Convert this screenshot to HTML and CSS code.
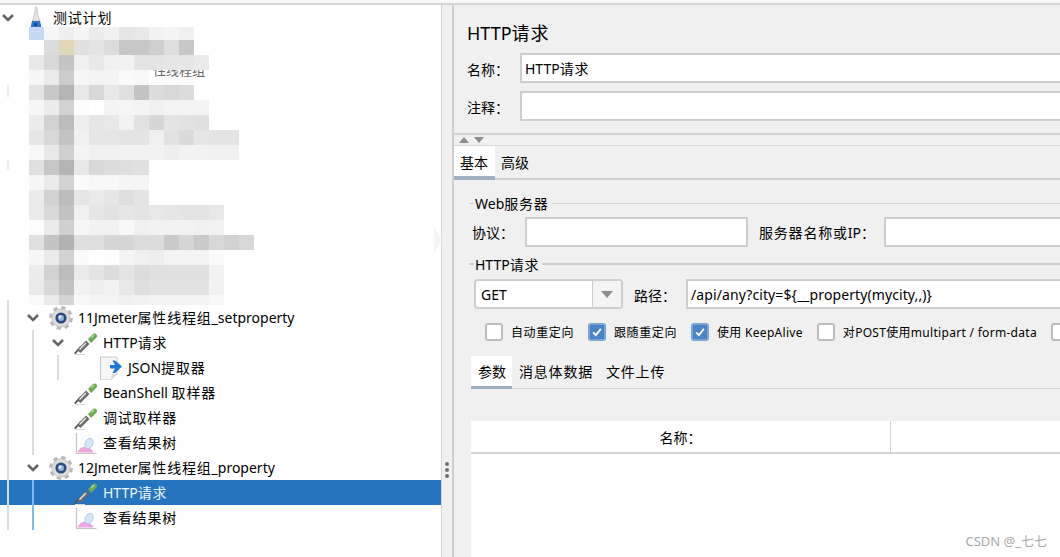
FILE: index.html
```html
<!DOCTYPE html>
<html lang="en">
<head>
    <meta charset="UTF-8">
    <meta name="viewport" content="width=device-width, initial-scale=1.0">
    <title>HTTP请求</title>
    <link rel="stylesheet" href="styles.css">
</head>
<body>
    <svg class="icon-defs" width="0" height="0">
        <symbol id="chevron" viewBox="0 0 14 10">
            <path d="M2 2 L7 7 L12 2" fill="none" stroke="#666" stroke-width="2.6"/>
        </symbol>
        <symbol id="flask" viewBox="0 0 24 24">
            <path d="M11.5 1 L13 1 L13.5 8 L16 15 L8.5 15 L10.5 8 Z" fill="#e6e6e6" stroke="#bcbcbc" stroke-width="0.8"/>
            <path d="M8 15 L16 15 L17.5 21.5 L6.5 21.5 Z" fill="#2b78d4"/>
            <path d="M10 17 L13 17 L13 20 L10 20 Z" fill="#0f4794"/>
        </symbol>
        <symbol id="gear" viewBox="0 0 24 24">
            <circle cx="12" cy="12" r="10.2" fill="none" stroke="#b8b8b8" stroke-width="3.4" stroke-dasharray="4.2 3.8"/>
            <circle cx="12" cy="12" r="9.2" fill="#dcdcdc" stroke="#bdbdbd" stroke-width="0.8"/>
            <circle cx="12" cy="12" r="5.6" fill="#2b4a82"/>
            <circle cx="12" cy="12" r="3" fill="#8fb2e0"/>
            <circle cx="11" cy="11" r="1.4" fill="#e6eefa"/>
        </symbol>
        <symbol id="dropper" viewBox="0 0 24 24">
            <path d="M1 23.5 L11 23.5" stroke="#d8d8d8" stroke-width="1"/>
            <path d="M0.8 22.6 L7 15.5" stroke="#555" stroke-width="1.8"/>
            <path d="M3 19 L12 9.5 L15.5 13 L6.5 22 Z" fill="#6a6a6a"/>
            <path d="M5.5 18.5 L12 12" stroke="#e8e8e8" stroke-width="1.4"/>
            <path d="M14 8 L18 4 Q20.5 1.5 22.5 3.5 Q24 5.5 21.5 7.5 L17 12 Z" fill="#6faa55"/>
            <path d="M17.5 6.5 L20 4" stroke="#b6d8a2" stroke-width="1.4"/>
        </symbol>
        <symbol id="extractor" viewBox="0 0 24 24">
            <path d="M1.5 1 L18 1 L18 18 L12 24 L1.5 24 Z" fill="#f7f7f7" stroke="#c8c8c8"/>
            <path d="M12 24 L13 18 L18 18 Z" fill="#dcdcdc"/>
            <path d="M11 9 L16 9 L13.5 4.5 L16 4.5 L23 10.5 L16 17 L13.5 17 L16 12.5 L11 12.5 Z" fill="#1d78d8"/>
        </symbol>
        <symbol id="graph" viewBox="0 0 24 24">
            <path d="M2.5 2 L2.5 22.5 L22.5 22.5" fill="none" stroke="#c4c4c4" stroke-width="1.2"/>
            <path d="M3.5 21.5 Q5 17 9 16 Q13 15 15 17 Q18.5 18 19.5 21.5 Z" fill="#f2a4dc"/>
            <ellipse cx="15" cy="12.5" rx="3.8" ry="5.5" transform="rotate(28 15 12.5)" fill="#d6e5f6" stroke="#a9c7e8" stroke-width="0.8"/>
        </symbol>
    </svg>

    <div class="top-strip"></div>
    <div class="app">
        <div class="tree">
            <div class="row lv0"><svg class="chev"><use href="#chevron"/></svg><svg class="icon"><use href="#flask"/></svg><span class="label cn">测试计划</span></div>
            <div class="tree-blur"></div>
            <div class="row lv1"><svg class="chev"><use href="#chevron"/></svg><svg class="icon"><use href="#gear"/></svg><span class="label">11Jmeter<span class="cn">属性线程组</span>_setproperty</span></div>
            <div class="row lv2"><svg class="chev"><use href="#chevron"/></svg><svg class="icon"><use href="#dropper"/></svg><span class="label">HTTP<span class="cn">请求</span></span></div>
            <div class="row lv3"><span class="chev"></span><svg class="icon"><use href="#extractor"/></svg><span class="label">JSON<span class="cn">提取器</span></span></div>
            <div class="row lv2"><span class="chev"></span><svg class="icon"><use href="#dropper"/></svg><span class="label">BeanShell <span class="cn">取样器</span></span></div>
            <div class="row lv2"><span class="chev"></span><svg class="icon"><use href="#dropper"/></svg><span class="label cn">调试取样器</span></div>
            <div class="row lv2"><span class="chev"></span><svg class="icon"><use href="#graph"/></svg><span class="label cn">查看结果树</span></div>
            <div class="row lv1"><svg class="chev"><use href="#chevron"/></svg><svg class="icon"><use href="#gear"/></svg><span class="label">12Jmeter<span class="cn">属性线程组</span>_property</span></div>
            <div class="row lv2 selected"><span class="chev"></span><svg class="icon"><use href="#dropper"/></svg><span class="label">HTTP<span class="cn">请求</span></span></div>
            <div class="row lv2"><span class="chev"></span><svg class="icon"><use href="#graph"/></svg><span class="label cn">查看结果树</span></div>

            <!-- the text sits under the pixelated cells, which hide its upper half -->
            <div class="mosaic-scrap">性线程组</div>
            <!-- pixelated part of the tree, cells are filled by script.js -->
            <div class="mosaic" id="mosaic"></div>

            <span class="guide g-root"></span>
            <span class="guide g-root-a"></span>
            <span class="guide g-root-b"></span>
            <span class="guide g-group"></span>
            <span class="guide g-http"></span>
            <span class="guide g-active"></span>
        </div>

        <div class="splitter">
            <span class="split-arrow"></span>
            <span class="grip"><i></i><i></i><i></i></span>
        </div>

        <div class="detail">
            <div class="detail-inner">
                <div class="head">
                    <h1>HTTP<span class="cn">请求</span></h1>
                    <div class="form-row">
                        <label class="head-label">名称：</label>
                        <div class="input grow">HTTP<span class="cn">请求</span></div>
                    </div>
                    <div class="form-row">
                        <label class="head-label">注释：</label>
                        <div class="input grow"></div>
                    </div>
                </div>

                <div class="arrows"><span class="tri-up"></span><span class="tri-down"></span></div>

                <div class="tabs main-tabs">
                    <div class="tab active">基本</div>
                    <div class="tab">高级</div>
                </div>

                <div class="group-title web-title"><span>Web<span class="cn">服务器</span></span></div>
                <div class="server-row">
                    <label class="proto-label">协议：</label>
                    <div class="input proto"></div>
                    <label class="server-label"><span class="cn">服务器名称或</span>IP：</label>
                    <div class="input grow"></div>
                </div>

                <div class="group-title http-title"><span>HTTP<span class="cn">请求</span></span></div>
                <div class="path-row">
                    <div class="select">
                        <span class="select-value">GET</span>
                        <span class="select-btn"><span class="tri-down big"></span></span>
                    </div>
                    <label class="path-label">路径：</label>
                    <div class="input grow path-input">/api/any?city=${__property(mycity,,)}</div>
                </div>

                <div class="checks">
                    <div class="check"><span class="box"></span><span>自动重定向</span></div>
                    <div class="check"><span class="box on"><svg viewBox="0 0 18 18"><path d="M4 9.5 L7.5 13 L14 5" fill="none" stroke="#fff" stroke-width="2.4"/></svg></span><span>跟随重定向</span></div>
                    <div class="check"><span class="box on"><svg viewBox="0 0 18 18"><path d="M4 9.5 L7.5 13 L14 5" fill="none" stroke="#fff" stroke-width="2.4"/></svg></span><span class="latin">使用 KeepAlive</span></div>
                    <div class="check"><span class="box"></span><span class="latin">对POST使用multipart / form-data</span></div>
                    <div class="check"><span class="box"></span></div>
                </div>

                <div class="tabs sub-tabs">
                    <div class="tab active">参数</div>
                    <div class="tab cn">消息体数据</div>
                    <div class="tab cn">文件上传</div>
                </div>

                <div class="params">
                    <div class="params-head">
                        <div class="col col-name">名称：</div>
                        <div class="col"></div>
                    </div>
                </div>
            </div>
        </div>
    </div>
    <div class="watermark">CSDN @_七七</div>

    <script src="script.js"></script>
</body>
</html>
```
FILE: styles.css
```css
html, body {
    margin: 0;
    padding: 0;
    height: 557px;
    overflow: hidden;
    background-color: #fff;
    color: #000;
    font-family: "Noto Sans", "Noto Sans CJK SC", sans-serif;
    font-size: 14px;
}
.cn {
    letter-spacing: 0.8px;
}
.icon-defs {
    position: absolute;
}
.top-strip {
    height: 5px;
    box-sizing: border-box;
    background-color: #f8f8f8;
    border-bottom: 2px solid #d6d6d6;
}
.app {
    display: flex;
    height: 552px;
}

/* Left tree */
.tree {
    position: relative;
    width: 441px;
    flex: none;
    overflow: hidden;
    background-color: #fff;
}
.row {
    display: flex;
    align-items: center;
    height: 25px;
    white-space: nowrap;
}
.lv0 { padding-left: 1px; }
.lv1 { padding-left: 26px; }
.lv2 { padding-left: 51px; }
.lv3 { padding-left: 76px; }
.chev {
    display: block;
    width: 14px;
    height: 10px;
    margin-right: 9px;
    flex: none;
}
.icon {
    width: 24px;
    height: 24px;
    flex: none;
}
.label {
    margin-left: 5px;
    line-height: 25px;
}
.selected {
    background-color: #2574bf;
    color: #eef5fc;
}
.tree-blur {
    height: 275px;
}
.mosaic {
    position: absolute;
    left: 29px;
    top: 22px;
}
.mosaic-row {
    display: flex;
    height: 15px;
}
.mosaic-row:first-child {
    height: 13px;
}
.mosaic-row:last-child {
    height: 10px;
}
.mosaic-cell {
    width: 15px;
    flex: none;
}
.mosaic-scrap {
    position: absolute;
    left: 153px;
    top: 58px;
    color: #666;
    font-size: 13px;
    line-height: 14px;
    white-space: nowrap;
}
.guide {
    position: absolute;
    width: 2px;
    background-color: #dcdcdc;
}
.g-root { left: 7px; top: 295px; height: 230px; }
.g-root-a { left: 7px; top: 80px; height: 12px; background-color: #ececec; }
.g-root-b { left: 7px; top: 155px; height: 10px; background-color: #ececec; }
.g-group { left: 32px; top: 325px; height: 125px; }
.g-http { left: 57px; top: 350px; height: 25px; }
.g-active { left: 32px; top: 475px; height: 50px; background-color: #7fbcf2; }

/* Splitter */
.splitter {
    position: relative;
    width: 10px;
    flex: none;
    background-color: #f0f0f0;
    border-left: 1px solid #d4d4d4;
    border-right: 2px solid #cfcfcf;
}
.split-arrow {
    position: absolute;
    left: -8px;
    top: 222px;
    border-left: 8px solid #f5f5f5;
    border-top: 13px solid transparent;
    border-bottom: 13px solid transparent;
}
.grip {
    position: absolute;
    left: 3px;
    top: 457px;
    display: flex;
    flex-direction: column;
    gap: 2px;
}
.grip i {
    display: block;
    width: 4px;
    height: 4px;
    border-radius: 50%;
    background-color: #6e6e6e;
}

/* Right detail panel */
.detail {
    flex: 1;
    min-width: 0;
    overflow: hidden;
    background-color: #f0f0f0;
}
.detail-inner {
    width: 800px;
    height: 552px;
}
.head {
    padding: 16px 0 0 13px;
    height: 128px;
    box-sizing: border-box;
}
.head h1 {
    margin: 0 0 5px;
    font-size: 18px;
    font-weight: normal;
    line-height: 24px;
}
.form-row {
    display: flex;
    align-items: center;
    margin-top: 8px;
}
.head-label {
    width: 53px;
    padding-top: 2px;
    flex: none;
}
.input {
    box-sizing: border-box;
    height: 30px;
    padding: 0 3px;
    line-height: 28px;
    white-space: nowrap;
    background-color: #fff;
    border: 2px solid #cdcdcd;
}
.grow {
    flex: 1;
}
.path-input {
    letter-spacing: 0.1px;
}
.arrows {
    display: flex;
    align-items: center;
    gap: 5px;
    height: 10px;
    padding-left: 5px;
    border-top: 2px solid #d2d2d2;
    border-bottom: 1px solid #d8d8d8;
}
.tri-up, .tri-down {
    display: block;
    width: 0;
    height: 0;
    border-left: 5px solid transparent;
    border-right: 5px solid transparent;
}
.tri-up { border-bottom: 6px solid #8c8c8c; }
.tri-down { border-top: 6px solid #8c8c8c; }
.tri-down.big {
    border-left-width: 6px;
    border-right-width: 6px;
    border-top-width: 7px;
}
.tabs {
    display: flex;
    box-sizing: border-box;
}
.tab {
    padding: 0 6px;
    box-sizing: border-box;
}
.tab.active {
    background-color: #fff;
    border-bottom: 4px solid #9fafc4;
}
.main-tabs {
    height: 34px;
    border-bottom: 2px solid #d2d2d2;
}
.main-tabs .tab {
    height: 34px;
    line-height: 34px;
}
.main-tabs .tab.active {
    line-height: 34px;
    width: 41px;
}
.group-title {
    display: flex;
    align-items: center;
    height: 22px;
    margin-left: 15px;
}
.group-title::before {
    content: "";
    width: 5px;
    height: 1px;
    background-color: #cfcfcf;
}
.group-title span {
    padding: 0 3px 0 1px;
}
.group-title span span {
    padding: 0;
}
.group-title::after {
    content: "";
    flex: 1;
    height: 1px;
    background-color: #cfcfcf;
}
.web-title {
    margin-top: 12px;
}
.http-title {
    margin-top: 6px;
}
.http-title::after, .http-title::before {
    height: 2px;
}
.server-row {
    display: flex;
    align-items: center;
    margin: 3px 0 0 18px;
}
.proto-label {
    width: 53px;
    flex: none;
}
.proto {
    width: 223px;
    flex: none;
}
.server-label {
    width: 125px;
    margin-left: 11px;
    flex: none;
    white-space: nowrap;
}
.path-row {
    display: flex;
    align-items: center;
    margin: 4px 0 0 20px;
}
.select {
    display: flex;
    box-sizing: border-box;
    width: 149px;
    height: 30px;
    flex: none;
    background-color: #fff;
    border: 2px solid #cdcdcd;
    border-radius: 4px;
}
.select-value {
    flex: 1;
    padding-left: 5px;
    line-height: 28px;
}
.select-btn {
    display: flex;
    align-items: center;
    justify-content: center;
    width: 28px;
    background-color: #f4f4f4;
    border-left: 1px solid #cdcdcd;
}
.path-label {
    width: 63px;
    padding: 2px 0 0 11px;
    box-sizing: border-box;
    flex: none;
}
.checks {
    display: flex;
    align-items: center;
    height: 19px;
    margin: 13px 0 0 31px;
    font-size: 12px;
    letter-spacing: 0.6px;
    white-space: nowrap;
}
.check {
    display: flex;
    align-items: center;
    gap: 8px;
    margin-right: 14px;
}
.latin {
    letter-spacing: 0.3px;
}
.box {
    display: block;
    box-sizing: border-box;
    width: 18px;
    height: 18px;
    flex: none;
    background-color: #fff;
    border: 2px solid #bdbdbd;
    border-radius: 3px;
}
.box.on {
    background-color: #4a83c6;
    border-color: #7ba4d6;
}
.box svg {
    display: block;
    width: 14px;
    height: 14px;
}
.sub-tabs {
    height: 33px;
    margin: 15px 0 0 17px;
    border-bottom: 1px solid #d2d2d2;
    gap: 1px;
}
.sub-tabs .tab {
    height: 33px;
    line-height: 32px;
}
.sub-tabs .tab.active {
    width: 41px;
    padding-left: 7px;
    line-height: 32px;
    border-bottom-width: 3px;
}
.params {
    height: 200px;
    margin: 32px 0 0 17px;
    background-color: #fff;
}
.params-head {
    display: flex;
    box-sizing: border-box;
    height: 33px;
    border-bottom: 2px solid #d4d4d4;
}
.col {
    flex: 1;
}
.col-name {
    flex: none;
    box-sizing: border-box;
    width: 420px;
    line-height: 33px;
    text-align: center;
    border-right: 1px solid #d4d4d4;
}
.watermark {
    position: absolute;
    right: 13px;
    top: 533px;
    color: #a8a8a8;
    font-size: 13px;
    line-height: 16px;
}
```
FILE: script.js
```js
// grey levels of the blurred cells, one string per row (6 digits = real colour)
var rows = [
    "c5d9f0 f7 ee f5 ec f0 e6 e8 f2 f4 f0",
    "ff dc e0d8b8 e0 e4 dc c6 c6 cf de c8",
    "e8 d8 c4 f0 e8 f0 f2 e4 e4 e6 e6 ea",
    "f6 ea cc f6 f4 f4 fa f8",
    "e4 c8 b4 e8 d8 e8 e0 c4 dc d8 dc",
    "f6 ec d2 fc ff f4 f6 f4 f0 f4 f4 f4",
    "ec d2 bc ee e6 e8 f2 e2 d6 e4 e2 e0",
    "e6 d8 c4 f0 e6 e6 e4 e4 f0 e2 da e6 e4 e4",
    "f8 e8 d0 f4 f0 f0 f2 f2 f2 ee f2 f2 f0 f0",
    "e0 c6 b4 e8 d8 dc de e0",
    "f6 ea d2 fb f8 f8 f5 f5",
    "ea d2 bc e6 ea e6 de e4",
    "ea d8 c2 f0 e6 e2 e6 e4 e8 e6 e4 e4 e8",
    "fc ea d0 f6 f2 f2 f8 f0 f2 f2 f2 f0 f2",
    "e0 c4 b2 de de d6 d6 dc dc ca d6 ca d8 d2 d8",
    "f6 ea d2 fb fe fd f4 f0 ee f4 f4 f4 fa",
    "ec d2 bc ea e4 dc e4 dc e0 e0 e0 e0 f2",
    "ea d8 c2 f2 ee f2 e8 de e2 e2 e2 e2 f2",
    "fa ea d4 f8 f4 f4 f0 f2 f4 f4 f4 f4 f8"
];

var mosaic = document.getElementById("mosaic");
rows.forEach(function(row) {
    var rowDiv = document.createElement("div");
    rowDiv.className = "mosaic-row";
    row.split(" ").forEach(function(v) {
        var cell = document.createElement("div");
        cell.className = "mosaic-cell";
        cell.style.backgroundColor = "#" + (v.length === 2 ? v + v + v : v);
        rowDiv.appendChild(cell);
    });
    mosaic.appendChild(rowDiv);
});
```
